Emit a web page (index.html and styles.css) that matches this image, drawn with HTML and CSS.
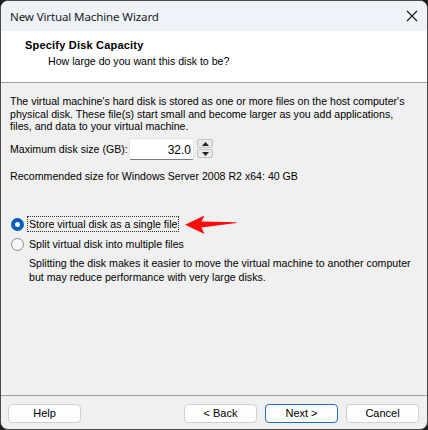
FILE: index.html
```html
<!DOCTYPE html>
<html lang="en">
<head>
<meta charset="utf-8">
<title>New Virtual Machine Wizard</title>
<link rel="stylesheet" href="styles.css">
</head>
<body>
<div class="window">
  <div class="titlebar">
    <span class="title">New Virtual Machine Wizard</span>
    <svg class="close" width="12" height="12" viewBox="0 0 12 12"><path d="M1 1 L11 11 M11 1 L1 11" stroke="#1a1a1a" stroke-width="1.1" fill="none"/></svg>
  </div>
  <div class="header">
    <div class="h-title">Specify Disk Capacity</div>
    <div class="h-sub">How large do you want this disk to be?</div>
  </div>
  <div class="content">
    <p class="intro">The virtual machine's hard disk is stored as one or more files on the host computer's physical disk. These file(s) start small and become larger as you add applications, files, and data to your virtual machine.</p>
    <div class="size-row">
      <label class="size-label">Maximum disk size (GB):</label>
      <div class="spin">
        <div class="spin-input">32.0</div>
        <div class="spin-btns">
          <div class="spin-btn"><svg width="7" height="4" viewBox="0 0 7 4"><path d="M0 4 L3.5 0 L7 4 Z" fill="#222"/></svg></div>
          <div class="spin-btn"><svg width="7" height="4" viewBox="0 0 7 4"><path d="M0 0 L7 0 L3.5 4 Z" fill="#222"/></svg></div>
        </div>
      </div>
    </div>
    <p class="recommend">Recommended size for Windows Server 2008 R2 x64: 40 GB</p>
    <div class="options">
      <div class="option">
        <span class="radio checked"></span>
        <span class="opt-label focus">Store virtual disk as a single file</span>
        <svg class="pointer" width="53" height="20" viewBox="0 0 53 20"><path d="M0 9.7 L19.5 0.5 L16.5 6.4 L51.5 7.2 L51.5 8 L16.5 12.4 L19.5 19 Z" fill="#ff0a0a"/></svg>
      </div>
      <div class="option">
        <span class="radio"></span>
        <span class="opt-label">Split virtual disk into multiple files</span>
      </div>
      <p class="opt-desc">Splitting the disk makes it easier to move the virtual machine to another computer but may reduce performance with very large disks.</p>
    </div>
  </div>
  <div class="footer">
    <button class="btn">Help</button>
    <div class="nav">
      <button class="btn">&lt; Back</button>
      <button class="btn default">Next &gt;</button>
      <button class="btn">Cancel</button>
    </div>
  </div>
</div>
</body>
</html>
```
FILE: styles.css
```css
html, body {
  margin: 0;
  padding: 0;
  background: #1c1c1c;
}

.window {
  box-sizing: border-box;
  width: 428px;
  height: 430px;
  border: 1px solid #4a4a4a;
  border-radius: 8px;
  overflow: hidden;
  background: #f0f0f0;
  display: flex;
  flex-direction: column;
  font-family: "Liberation Sans", Arial, sans-serif;
  font-size: 10.6px;
  color: #000;
}

.titlebar {
  height: 30px;
  flex: none;
  background: #eef3f9;
  display: flex;
  align-items: center;
  justify-content: space-between;
  padding: 0 9px 0 9px;
}

.title {
  font-family: "Noto Sans", "Open Sans", sans-serif;
  font-size: 11.6px;
  letter-spacing: -0.15px;
  color: #1a1a1a;
}

.header {
  height: 52px;
  flex: none;
  background: #fff;
  border-bottom: 1px solid #a0a0a0;
  box-sizing: border-box;
  padding: 7px 0 0 24px;
}

.h-title {
  font-weight: bold;
  font-size: 11px;
  letter-spacing: 0.2px;
  line-height: 14px;
}

.h-sub {
  margin: 2px 0 0 23px;
  line-height: 14px;
}

.content {
  flex: 1;
  padding: 12px 10px 0 9px;
}

.intro {
  margin: 0;
  line-height: 12.7px;
}

.size-row {
  display: flex;
  align-items: center;
  margin-top: 5px;
  height: 22px;
}

.size-label {
  width: 119px;
  white-space: nowrap;
}

.spin {
  display: flex;
  height: 22px;
}

.spin-input {
  box-sizing: border-box;
  width: 65px;
  height: 22px;
  background: #fff;
  border: 1px solid #e3e3e3;
  border-bottom-color: #7a7a7a;
  border-radius: 2px;
  text-align: right;
  padding: 3px 2px 0 0;
  font-size: 12px;
  line-height: 16px;
}

.spin-btns {
  display: flex;
  flex-direction: column;
  gap: 1px;
  margin-left: 3px;
  padding-top: 1px;
}

.spin-btn {
  box-sizing: border-box;
  width: 16px;
  height: 9px;
  background: #e8e8e8;
  border: 1px solid #c4c4c4;
  border-radius: 2px;
  display: flex;
  align-items: center;
  justify-content: center;
}

.recommend {
  margin: 10px 0 0 0;
  line-height: 13px;
}

.options {
  margin-top: 31px;
}

.option {
  display: flex;
  align-items: center;
  height: 20px;
}

.radio {
  box-sizing: border-box;
  width: 13px;
  height: 13px;
  border-radius: 50%;
  border: 1px solid #8a8a8a;
  background: #f6f6f6;
  margin: 0 3px 0 1px;
  flex: none;
}

.radio.checked {
  border: 4px solid #005fb8;
  background: #fff;
}

.opt-label {
  padding: 1px 1px;
  line-height: 12px;
  border: 1px dotted transparent;
}

.opt-label.focus {
  border-color: #333;
}

.pointer {
  margin-left: 6px;
  margin-top: 2px;
}

.opt-desc {
  margin: 3px 0 0 19px;
  line-height: 13.5px;
}

.footer {
  flex: none;
  height: 34px;
  border-top: 1px solid #a0a0a0;
  display: flex;
  align-items: flex-start;
  justify-content: space-between;
  padding: 8px 8px 0 7px;
  box-sizing: border-box;
}

.nav {
  display: flex;
  gap: 8px;
}

.btn {
  box-sizing: border-box;
  width: 73px;
  height: 19px;
  background: #fdfdfd;
  border: 1px solid #d0d0d0;
  border-radius: 4px;
  font-family: "Liberation Sans", Arial, sans-serif;
  font-size: 11px;
  color: #000;
  padding: 0;
  line-height: 17px;
}

.btn.default {
  border-color: #1f6fc0;
}
```
